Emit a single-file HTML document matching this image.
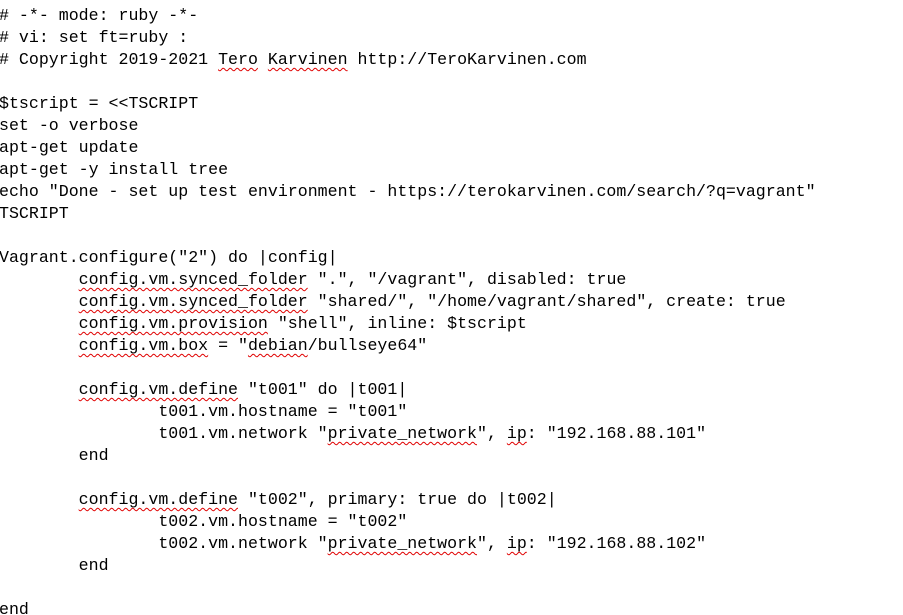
<!DOCTYPE html>
<html><head><meta charset="utf-8"><style>
html,body{margin:0;padding:0;background:#fff;width:903px;height:615px;overflow:hidden}
pre{margin:0 0 0 -1px;padding:5px 0 0 0;font-family:"Liberation Mono",monospace;font-size:16.6px;line-height:22px;color:#000;tab-size:8;white-space:pre}
.s{text-decoration:underline wavy #e00000;text-decoration-thickness:1px;text-underline-offset:3px;text-decoration-skip-ink:none}
</style></head><body><pre># -*- mode: ruby -*-
# vi: set ft=ruby :
# Copyright 2019-2021 <span class="s">Tero</span> <span class="s">Karvinen</span> http://TeroKarvinen.com

$tscript = &lt;&lt;TSCRIPT
set -o verbose
apt-get update
apt-get -y install tree
echo "Done - set up test environment - https://terokarvinen.com/search/?q=vagrant"
TSCRIPT

Vagrant.configure("2") do |config|
	<span class="s">config.vm.synced_folder</span> ".", "/vagrant", disabled: true
	<span class="s">config.vm.synced_folder</span> "shared/", "/home/vagrant/shared", create: true
	<span class="s">config.vm.provision</span> "shell", inline: $tscript
	<span class="s">config.vm.box</span> = "<span class="s">debian</span>/bullseye64"

	<span class="s">config.vm.define</span> "t001" do |t001|
		t001.vm.hostname = "t001"
		t001.vm.network "<span class="s">private_network</span>", <span class="s">ip</span>: "192.168.88.101"
	end

	<span class="s">config.vm.define</span> "t002", primary: true do |t002|
		t002.vm.hostname = "t002"
		t002.vm.network "<span class="s">private_network</span>", <span class="s">ip</span>: "192.168.88.102"
	end

end</pre></body></html>
